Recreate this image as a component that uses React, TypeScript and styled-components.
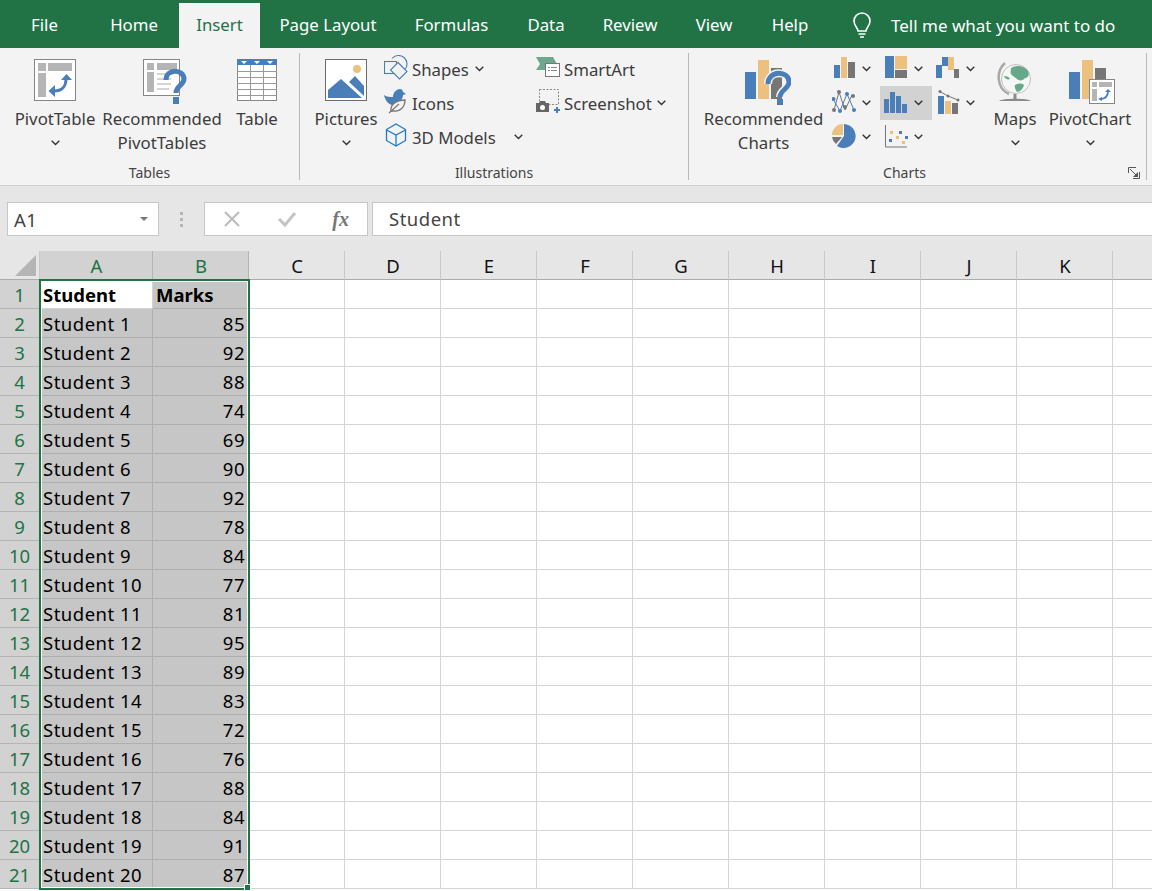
import * as React from "react";
import styled, { createGlobalStyle } from "styled-components";

const GREEN = "#217346";
const BLUE = "#4a7eb8";
const GOLD = "#ecc07f";
const GREY = "#767676";

const Global = createGlobalStyle`
	html, body {
		margin: 0;
		padding: 0;
		height: 891px;
		overflow: hidden;
		background: #fff;
		font-family: "Noto Sans", "Open Sans", sans-serif;
		color: #3c3c3c;
	}
`;

const Page = styled.div`
	width: 1152px;
	height: 891px;
	overflow: hidden;
	display: flex;
	flex-direction: column;
`;

const TabBar = styled.div`
	height: 48px;
	padding-top: 3px;
	box-sizing: border-box;
	background: ${GREEN};
	display: flex;
	align-items: stretch;
	font-size: 16.8px;
	color: #fff;
`;

const Tab = styled.div<{ $w: number; $active?: boolean }>`
	width: ${(p) => p.$w}px;
	text-align: center;
	line-height: 44px;
	white-space: nowrap;
	background: ${(p) => (p.$active ? "#f3f3f3" : "transparent")};
	color: ${(p) => (p.$active ? GREEN : "#fff")};
`;

const TellMe = styled.div`
	margin-left: 24px;
	display: flex;
	align-items: center;
	gap: 18px;
	font-size: 17px;
	line-height: 44px;
	white-space: nowrap;
`;

const Ribbon = styled.div`
	height: 138px;
	box-sizing: border-box;
	background: #f3f3f3;
	border-bottom: 1px solid #d0d0d0;
	display: flex;
	align-items: flex-start;
	font-size: 16.8px;
`;

const Group = styled.div<{ $w: number }>`
	width: ${(p) => p.$w}px;
	height: 137px;
	display: flex;
	flex-direction: column;
`;

const GroupBody = styled.div<{ $pad?: number }>`
	flex: 1;
	display: flex;
	align-items: flex-start;
	padding: 5px 0 0 ${(p) => p.$pad ?? 0}px;
`;

const GroupFooter = styled.div`
	height: 30px;
	display: flex;
	align-items: flex-start;
	font-size: 14px;
	color: #444;
`;

const GroupLabel = styled.div`
	flex: 1;
	text-align: center;
	line-height: 36px;
`;

const Launcher = styled.svg`
	margin: 12px 6px 0 8px;
`;

const Divider = styled.div`
	width: 1px;
	height: 127px;
	margin-top: 5px;
	background: #b8b8b8;
	flex-shrink: 0;
`;

const LargeButton = styled.div<{ $w: number }>`
	width: ${(p) => p.$w}px;
	padding-top: 1px;
	display: flex;
	flex-direction: column;
	align-items: center;
	line-height: 24px;
	text-align: center;
	white-space: nowrap;
`;

const LargeIcon = styled.div`
	height: 53px;
	display: flex;
	align-items: flex-start;
	justify-content: center;
	padding-top: 5px;
	box-sizing: border-box;
`;

const ChevronRow = styled.div`
	height: 24px;
	display: flex;
	align-items: center;
`;

const SmallColumn = styled.div<{ $w: number }>`
	width: ${(p) => p.$w}px;
	margin-top: -1px;
	display: flex;
	flex-direction: column;
`;

const SmallButton = styled.div`
	height: 34px;
	display: flex;
	align-items: center;
	white-space: nowrap;
`;

const SmallIcon = styled.div`
	width: 24px;
	margin: 0 4px 4px 0;
	display: flex;
	justify-content: center;
`;

const ChevronGap = styled.span<{ $w: number }>`
	display: inline-flex;
	margin-left: ${(p) => p.$w}px;
`;

const ChartGrid = styled.div`
	margin-top: -1px;
	display: grid;
	grid-template-columns: repeat(3, 52px);
	grid-auto-rows: 34px;
`;

const ChartCell = styled.div<{ $on?: boolean }>`
	display: flex;
	align-items: center;
	padding-left: 4px;
	gap: 6px;
	background: ${(p) => (p.$on ? "#d2d2d2" : "transparent")};
`;

const ChartIconSlot = styled.div`
	width: 24px;
	margin-bottom: 3px;
	display: flex;
	justify-content: center;
`;

const FormulaArea = styled.div`
	height: 65px;
	box-sizing: border-box;
	background: #e6e6e6;
	padding: 16px 0 0 7px;
	display: flex;
	align-items: flex-start;
`;

const NameBox = styled.div`
	width: 152px;
	height: 34px;
	box-sizing: border-box;
	background: #fff;
	border: 1px solid #c6c6c6;
	padding: 0 10px 0 6px;
	display: flex;
	align-items: center;
	justify-content: space-between;
	font-size: 18.5px;
	letter-spacing: 0.5px;
	color: #444;
`;

const DropTriangle = styled.span`
	width: 0;
	height: 0;
	border-left: 4px solid transparent;
	border-right: 4px solid transparent;
	border-top: 4px solid #777;
`;

const Grip = styled.div`
	width: 45px;
	height: 34px;
	display: flex;
	flex-direction: column;
	align-items: center;
	justify-content: center;
	gap: 3px;

	span {
		width: 3px;
		height: 3px;
		background: #b5b5b5;
	}
`;

const FormulaButtons = styled.div`
	width: 164px;
	height: 34px;
	box-sizing: border-box;
	background: #fff;
	border: 1px solid #c6c6c6;
	display: flex;
	align-items: center;
	padding: 0 18px 0 18px;
	justify-content: space-between;
`;

const Fx = styled.span`
	font-family: "Liberation Serif", serif;
	font-style: italic;
	font-weight: 700;
	font-size: 20px;
	color: #777;
`;

const FormulaInput = styled.div`
	flex: 1;
	height: 34px;
	margin-left: 4px;
	box-sizing: border-box;
	background: #fff;
	border: 1px solid #c6c6c6;
	border-right: none;
	padding-left: 16px;
	font-size: 18.5px;
	letter-spacing: 0.5px;
	line-height: 32px;
	color: #444;
`;

const Sheet = styled.div`
	position: relative;
	flex: 1;
	display: grid;
	grid-template-columns: 40px 113px 96px repeat(10, 96px);
	grid-auto-rows: 29px;
	font-size: 18.5px;
	color: #000;
	background: #fff;
`;

const Corner = styled.div`
	background: #e6e6e6;
	border-bottom: 1px solid #ababab;
	border-right: 1px solid #c8c8c8;
	box-sizing: border-box;
	display: flex;
	align-items: flex-end;
	justify-content: flex-end;
	padding: 0 3px 3px 0;
`;

const ColHead = styled.div<{ $on?: boolean }>`
	box-sizing: border-box;
	background: ${(p) => (p.$on ? "#d2d2d2" : "#e6e6e6")};
	color: ${(p) => (p.$on ? GREEN : "#111")};
	border-bottom: 1px solid #ababab;
	border-right: 1px solid ${(p) => (p.$on ? "#b4b4b4" : "#c8c8c8")};
	padding-left: 1px;
	text-align: center;
	line-height: 30px;
`;

const RowHead = styled.div`
	box-sizing: border-box;
	background: #d2d2d2;
	color: ${GREEN};
	border-bottom: 1px solid #b4b4b4;
	border-right: 1px solid #b4b4b4;
	text-align: center;
	line-height: 30px;
`;

const Cell = styled.div<{ $sel?: boolean; $white?: boolean; $bold?: boolean; $num?: boolean }>`
	box-sizing: border-box;
	background: ${(p) => (p.$white ? "#fff" : p.$sel ? "#c6c6c6" : "#fff")};
	border-bottom: 1px solid ${(p) => (p.$sel ? "#aeaeae" : "#d4d4d4")};
	border-right: 1px solid ${(p) => (p.$sel ? "#aeaeae" : "#d4d4d4")};
	padding: 0 3px 0 3px;
	font-weight: ${(p) => (p.$bold ? 700 : 400)};
	letter-spacing: ${(p) => (p.$bold ? "0" : "0.5px")};
	text-align: ${(p) => (p.$num ? "right" : "left")};
	line-height: 30px;
	white-space: nowrap;
`;

const Selection = styled.div`
	position: absolute;
	left: 39px;
	top: 28px;
	width: 211px;
	height: 611px;
	box-sizing: border-box;
	border: 2px solid ${GREEN};
	box-shadow: inset 0 0 0 1px #fff;
	pointer-events: none;
`;

const Handle = styled.div`
	position: absolute;
	right: -3px;
	bottom: -3px;
	width: 7px;
	height: 7px;
	background: ${GREEN};
	border: 1px solid #fff;
	box-sizing: border-box;
`;

const Chevron = () => (
	<svg width="9" height="6" viewBox="0 0 9 6">
		<path d="M.7.8l3.8 3.8L8.3.8" fill="none" stroke="#333" strokeWidth="1.4" />
	</svg>
);

const Bulb = () => (
	<svg width="22" height="27" viewBox="0 0 22 27" fill="none" stroke="#fff" strokeWidth="1.6">
		<path d="M7 19c0-3-4-5-4-10a8 8 0 0 1 16 0c0 5-4 7-4 10z" />
		<path d="M7.500 22h7M9 25h4" />
	</svg>
);

const PivotIcon = () => (
	<svg width="42" height="42" viewBox="0 0 42 42">
		<rect x=".5" y=".5" width="41" height="41" fill="#fff" stroke="#868686" />
		<path d="M4 4h8v8H4zM14 4h24v8H14zM4 14h8v24H4z" fill="#b5b5b5" />
		<path d="M32 20c0 7-4 12-12 12" fill="none" stroke={BLUE} strokeWidth="3" />
		<path d="M27 21l5.500-6 5.500 6zM21 26l-6.500 6 6.500 6z" fill={BLUE} />
	</svg>
);

const RecommendedPivotIcon = () => (
	<svg width="50" height="46" viewBox="-6 0 50 46">
		<rect x=".5" y=".5" width="36" height="36" fill="#fff" stroke="#868686" />
		<path d="M4 4h7v7H4zM14 4h20v7H14zM4 13h7v20H4z" fill="#b5b5b5" />
		<path d="M14 15h16M14 20h14M14 25h14M14 30h12" stroke="#d4d4d4" strokeWidth="2" />
		<path d="M23 21c0-12 18-11 18-1 0 6-8 7-8 14" fill="none" stroke={BLUE} strokeWidth="5" />
		<rect x="30" y="38" width="6" height="7" fill={BLUE} />
	</svg>
);

const TableIcon = () => (
	<svg width="40" height="42" viewBox="0 0 40 42">
		<rect x=".5" y=".5" width="39" height="41" fill="#fff" stroke="#868686" />
		<rect width="40" height="6" fill={BLUE} />
		<path d="M4 2h6l-3 3zM17 2h6l-3 3zM30 2h6l-3 3z" fill="#fff" />
		<path d="M0 12.500h40M0 18.500h40M0 24.500h40M0 30.500h40M0 36.500h40M13.500 6v36M26.500 6v36" stroke="#999" />
	</svg>
);

const PicturesIcon = () => (
	<svg width="42" height="42" viewBox="0 0 42 42">
		<rect x=".5" y=".5" width="41" height="41" fill="#fff" stroke="#6b6b6b" />
		<circle cx="32" cy="10" r="4" fill={GOLD} />
		<path d="M3 39v-8l13-11 21 19z" fill={BLUE} />
		<path d="M24 23l6-6 9 10v10z" fill={BLUE} />
	</svg>
);

const ShapesIcon = () => (
	<svg width="24" height="25" viewBox="0 0 24 25" fill="none" stroke={BLUE} strokeWidth="1.1">
		<path d="M8 3.500a8 8 0 1 1 13 11" />
		<rect x=".5" y="6.500" width="12" height="12" fill="#f3f3f3" />
		<path d="M14 7.500l9 9-7.500 7.500-9-9z" fill="#f3f3f3" />
	</svg>
);

const BirdIcon = () => (
	<svg width="24" height="25" viewBox="0 0 24 25">
		<path d="M0 6c3 2 6 2 9 2 0-5 4-8 7-8 2 0 3 2 3 3l3 2-3 1c0 3-2 6-5 6l-6 4C4 15 1 11 0 6z" fill={BLUE} />
		<path d="M7 22C6 16 12 11 21 11c0 7-5 12-11 11z" fill="#f3f3f3" stroke={GREY} strokeWidth="1.300" />
		<path d="M5 24L15 15" stroke={GREY} strokeWidth="1.100" fill="none" />
	</svg>
);

const CubeIcon = () => (
	<svg width="22" height="24" viewBox="0 0 22 24" fill="none" stroke="#1f78c8" strokeWidth="1.300">
		<path d="M11 1l9.500 5.500v11L11 23 1.500 17.500v-11z" />
		<path d="M1.500 7L11 12l9.500-5M11 12v11" />
	</svg>
);

const SmartArtIcon = () => (
	<svg width="24" height="22" viewBox="0 0 24 22">
		<path d="M0 1h17l4 7-3 6H0l4-6z" fill="#6fa78e" />
		<rect x="9.500" y="7.500" width="14" height="13" fill="#fff" stroke="#777" />
		<path d="M12 11.500h2M15 11.500h6M12 14.500h2M15 14.500h6" stroke="#888" />
	</svg>
);

const ScreenshotIcon = () => (
	<svg width="24" height="24" viewBox="0 0 24 24">
		<rect x="3.500" y=".5" width="19" height="15" fill="none" stroke="#8a8a8a" strokeDasharray="2 1.500" />
		<path d="M0 14h3l1-2h5l1 2h3v9H0z" fill="#666" />
		<circle cx="6.500" cy="18.500" r="2.500" fill="#fff" />
		<path d="M21 18v6M18 21h6" stroke={BLUE} strokeWidth="2" />
	</svg>
);

const RecommendedChartsIcon = () => (
	<svg width="54" height="46" viewBox="-8 -1 54 46">
		<rect y="12" width="11" height="27" fill={BLUE} />
		<rect x="13" y="0" width="11" height="39" fill={GOLD} />
		<rect x="26" y="8" width="11" height="31" fill={GREY} />
		<path d="M23 24c0-14 21-14 21-2 0 7-9 8-9 15" fill="none" stroke="#f3f3f3" strokeWidth="8" />
		<path d="M23 24c0-14 21-14 21-2 0 7-9 8-9 15" fill="none" stroke={BLUE} strokeWidth="5" />
		<rect x="32" y="39" width="6" height="6" fill={BLUE} />
	</svg>
);

const ColumnChart = () => (
	<svg width="24" height="23" viewBox="-2 0 24 23">
		<rect y="9" width="6" height="13" fill={BLUE} />
		<rect x="7" y="1" width="6" height="21" fill={GOLD} />
		<rect x="14" y="6" width="7" height="16" fill={GREY} />
	</svg>
);

const TreemapChart = () => (
	<svg width="24" height="23" viewBox="-1 0 24 23">
		<rect width="9" height="22" fill={BLUE} />
		<rect x="10" width="12" height="13" fill={GOLD} />
		<rect x="10" y="14" width="12" height="8" fill={GREY} />
	</svg>
);

const WaterfallChart = () => (
	<svg width="24" height="23" viewBox="0 0 24 23">
		<rect y="9" width="6" height="13" fill={BLUE} />
		<rect x="6" y="1" width="6" height="9" fill={BLUE} />
		<rect x="12" y="1" width="6" height="13" fill={GOLD} />
		<rect x="18" y="13" width="5" height="9" fill={GREY} />
	</svg>
);

const LineChart = () => (
	<svg width="24" height="24" viewBox="0 0 24 24" fill="none">
		<path d="M2 20L7 2l6 18L20 5" stroke={GREY} strokeWidth="1" />
		<path d="M1 9l7 12L15 4l7 16" stroke={BLUE} strokeWidth="1" />
		<g fill={GREY}>
			<circle cx="2" cy="20" r="2" /><circle cx="7" cy="2" r="2" /><circle cx="13" cy="17" r="2" /><circle cx="21" cy="6" r="2" />
		</g>
		<g fill={BLUE}>
			<circle cx="1.500" cy="9" r="2" /><circle cx="8" cy="21" r="2" /><circle cx="15" cy="4" r="2" /><circle cx="22" cy="20" r="2" />
		</g>
	</svg>
);

const BarChart = () => (
	<svg width="24" height="22" viewBox="0 0 24 22" fill={BLUE}>
		<rect y="8" width="5" height="14" />
		<rect x="6" y="1" width="5" height="21" />
		<rect x="12" y="5" width="5" height="17" />
		<rect x="18" y="13" width="5" height="9" />
	</svg>
);

const ComboChart = () => (
	<svg width="24" height="24" viewBox="-2 0 24 24">
		<rect y="6" width="6" height="18" fill={BLUE} />
		<rect x="7" y="11" width="6" height="13" fill={GOLD} />
		<rect x="14" y="13" width="6" height="11" fill={GREY} />
		<path d="M1 1l9 5 10 4" stroke={GREY} fill="none" />
		<circle cx="2" cy="1.500" r="1.500" fill={GREY} />
		<circle cx="10" cy="6" r="1.500" fill={GREY} />
		<circle cx="20" cy="10" r="1.500" fill={GREY} />
	</svg>
);

const PieChart = () => (
	<svg width="24" height="24" viewBox="0 0 24 24">
		<path d="M12 0a12 12 0 1 1-7 22l7-10z" fill={BLUE} />
		<path d="M11 0v11H0A11 11 0 0 1 11 0z" fill={GOLD} />
		<path d="M0 13h10l-6 7a11 11 0 0 1-4-7z" fill={GREY} />
	</svg>
);

const ScatterChart = () => (
	<svg width="24" height="24" viewBox="-1 0 24 24">
		<path d="M.5 1v22H22" fill="none" stroke={GREY} />
		<g fill={BLUE}>
			<rect x="4" y="15" width="3" height="3" /><rect x="14" y="7" width="3" height="3" /><rect x="20" y="12" width="3" height="3" />
		</g>
		<g fill={GOLD}>
			<rect x="5" y="7" width="3" height="3" /><rect x="11" y="12" width="3" height="3" /><rect x="17" y="17" width="3" height="3" />
		</g>
	</svg>
);

const GlobeIcon = () => (
	<svg width="36" height="44" viewBox="0 0 36 44" fill="none">
		<path d="M8 4C-1 12-1 29 12 35" stroke="#a8a8a8" strokeWidth="2.500" />
		<circle cx="19" cy="20" r="14.500" fill="#f4f7f4" stroke="#c0c0c0" />
		<path d="M14 9c5-3 13-3 17 3 2 4 0 7-3 7-2 3-6 3-8 1s-5-3-6-5 0-4 0-6z" fill="#68a88a" />
		<path d="M18 26c3-2 7-2 9 0-1 4-4 7-7 7-1-2-3-4-2-7zM7 17c3 0 5 1 6 3-2 1-5 0-6-3z" fill="#68a88a" />
		<path d="M18 35v5" stroke="#8a8a8a" strokeWidth="3" />
		<path d="M2 42c3-3 29-3 32 0z" fill="#8a8a8a" />
	</svg>
);

const PivotChartIcon = () => (
	<svg width="54" height="46" viewBox="-6 -1 54 46">
		<rect y="12" width="11" height="27" fill={BLUE} />
		<rect x="13" y="0" width="11" height="39" fill={GOLD} />
		<rect x="26" y="8" width="11" height="31" fill={GREY} />
		<rect x="20.500" y="19.500" width="25" height="24" fill="#fff" stroke="#868686" />
		<path d="M23 22h5v5h-5zM30 22h13v5H30zM23 29h5v12h-5z" fill="#b5b5b5" />
		<path d="M31 39c5 0 8-3 8-8" fill="none" stroke={BLUE} strokeWidth="1.800" />
		<path d="M36 32l3-3 3 3zM33 37l-4 2 4 2z" fill={BLUE} />
	</svg>
);

const LauncherIcon = () => (
	<Launcher width="12" height="12" viewBox="0 0 12 12" fill="none" stroke="#555">
		<path d="M11.500 5V11.500H5M.5 6V.5H8M2 2l7 7" />
		<path d="M10 5v5H5z" fill="#555" stroke="none" />
	</Launcher>
);

const tabs = [
	{ name: "File", w: 89 },
	{ name: "Home", w: 90 },
	{ name: "Insert", w: 81 },
	{ name: "Page Layout", w: 136 },
	{ name: "Formulas", w: 111 },
	{ name: "Data", w: 78 },
	{ name: "Review", w: 90 },
	{ name: "View", w: 78 },
	{ name: "Help", w: 74 },
];

// column L only shows its first pixels, its letter is off the page
const columns = ["A", "B", "C", "D", "E", "F", "G", "H", "I", "J", "K", ""];
const marks = [85, 92, 88, 74, 69, 90, 92, 78, 84, 77, 81, 95, 89, 83, 72, 76, 88, 84, 91, 87];
const emptyColumns = columns.slice(2);

const charts = [
	<ColumnChart />, <TreemapChart />, <WaterfallChart />,
	<LineChart />, <BarChart />, <ComboChart />,
	<PieChart />, <ScatterChart />,
];

// markup
const App = () => {
	return (
		<Page>
			<Global />
			<TabBar>
				{tabs.map((t) => (
					<Tab key={t.name} $w={t.w} $active={t.name === "Insert"}>{t.name}</Tab>
				))}
				<TellMe><Bulb />Tell me what you want to do</TellMe>
			</TabBar>

			<Ribbon>
				<Group $w={299}>
					<GroupBody $pad={13}>
						<LargeButton $w={84}>
							<LargeIcon><PivotIcon /></LargeIcon>
							PivotTable
							<ChevronRow><Chevron /></ChevronRow>
						</LargeButton>
						<LargeButton $w={130}>
							<LargeIcon><RecommendedPivotIcon /></LargeIcon>
							Recommended
							<div>PivotTables</div>
						</LargeButton>
						<LargeButton $w={60}>
							<LargeIcon><TableIcon /></LargeIcon>
							Table
						</LargeButton>
					</GroupBody>
					<GroupFooter><GroupLabel>Tables</GroupLabel></GroupFooter>
				</Group>
				<Divider />
				<Group $w={388}>
					<GroupBody $pad={8}>
						<LargeButton $w={76}>
							<LargeIcon><PicturesIcon /></LargeIcon>
							Pictures
							<ChevronRow><Chevron /></ChevronRow>
						</LargeButton>
						<SmallColumn $w={152}>
							<SmallButton><SmallIcon><ShapesIcon /></SmallIcon>Shapes<ChevronGap $w={6}><Chevron /></ChevronGap></SmallButton>
							<SmallButton><SmallIcon><BirdIcon /></SmallIcon>Icons</SmallButton>
							<SmallButton><SmallIcon><CubeIcon /></SmallIcon>3D Models<ChevronGap $w={18}><Chevron /></ChevronGap></SmallButton>
						</SmallColumn>
						<SmallColumn $w={140}>
							<SmallButton><SmallIcon><SmartArtIcon /></SmallIcon>SmartArt</SmallButton>
							<SmallButton><SmallIcon><ScreenshotIcon /></SmallIcon>Screenshot<ChevronGap $w={5}><Chevron /></ChevronGap></SmallButton>
						</SmallColumn>
					</GroupBody>
					<GroupFooter><GroupLabel>Illustrations</GroupLabel></GroupFooter>
				</Group>
				<Divider />
				<Group $w={457}>
					<GroupBody $pad={10}>
						<LargeButton $w={129}>
							<LargeIcon><RecommendedChartsIcon /></LargeIcon>
							Recommended
							<div>Charts</div>
						</LargeButton>
						<ChartGrid>
							{charts.map((icon, i) => (
								<ChartCell key={i} $on={i === 4}>
									<ChartIconSlot>{icon}</ChartIconSlot>
									<Chevron />
								</ChartCell>
							))}
						</ChartGrid>
						<LargeButton $w={62}>
							<LargeIcon><GlobeIcon /></LargeIcon>
							Maps
							<ChevronRow><Chevron /></ChevronRow>
						</LargeButton>
						<LargeButton $w={88}>
							<LargeIcon><PivotChartIcon /></LargeIcon>
							PivotChart
							<ChevronRow><Chevron /></ChevronRow>
						</LargeButton>
					</GroupBody>
					<GroupFooter><GroupLabel>Charts</GroupLabel><LauncherIcon /></GroupFooter>
				</Group>
				<Divider />
			</Ribbon>

			<FormulaArea>
				<NameBox>A1<DropTriangle /></NameBox>
				<Grip><span /><span /><span /></Grip>
				<FormulaButtons>
					<svg width="18" height="18" viewBox="0 0 18 18"><path d="M2 2l14 14M16 2L2 16" stroke="#bdbdbd" strokeWidth="2.200" /></svg>
					<svg width="20" height="18" viewBox="0 0 20 18"><path d="M2 9l6 6L18 3" fill="none" stroke="#c4c4c4" strokeWidth="3" /></svg>
					<Fx>fx</Fx>
				</FormulaButtons>
				<FormulaInput>Student</FormulaInput>
			</FormulaArea>

			<Sheet>
				<Corner>
					<svg width="21" height="21" viewBox="0 0 21 21"><path d="M21 0v21H0z" fill="#b5b5b5" /></svg>
				</Corner>
				{columns.map((c, i) => (
					<ColHead key={i} $on={i < 2}>{c}</ColHead>
				))}

				<RowHead>1</RowHead>
				<Cell $white $bold>Student</Cell>
				<Cell $sel $bold>Marks</Cell>
				{emptyColumns.map((c, i) => <Cell key={i} />)}

				{marks.map((m, i) => (
					<React.Fragment key={i}>
						<RowHead>{i + 2}</RowHead>
						<Cell $sel>Student {i + 1}</Cell>
						<Cell $sel $num>{m}</Cell>
						{emptyColumns.map((c, j) => <Cell key={j} />)}
					</React.Fragment>
				))}

				<Selection><Handle /></Selection>
			</Sheet>
		</Page>
	);
};

export default App;
